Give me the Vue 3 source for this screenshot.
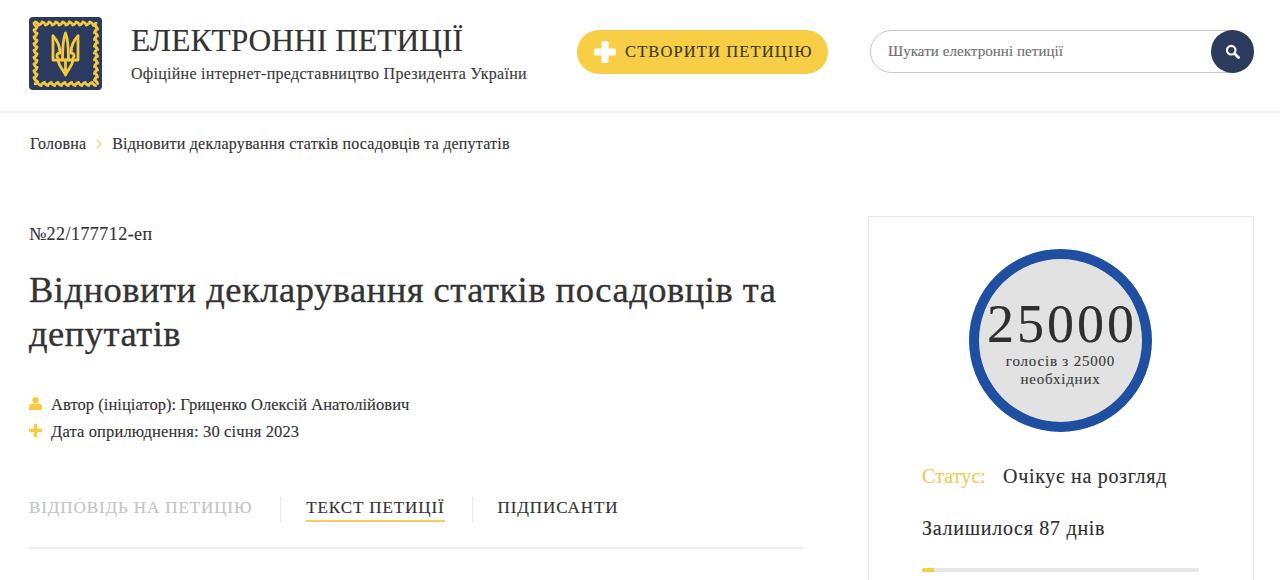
<script setup>
const leaves = []
const a = 6.5, b = 67, step = 6.800
for (let p = a + 1; p < b; p += step) {
  leaves.push({ x: p, y: a - 0.8, r: 30 })
  leaves.push({ x: p + 3.400, y: a + 0.8, r: -30 })
  leaves.push({ x: p, y: b - 0.8, r: -30 })
  leaves.push({ x: p + 3.400, y: b + 0.8, r: 30 })
  leaves.push({ x: a - 0.8, y: p, r: 60 })
  leaves.push({ x: a + 0.8, y: p + 3.400, r: -60 })
  leaves.push({ x: b - 0.8, y: p, r: -60 })
  leaves.push({ x: b + 0.8, y: p + 3.400, r: 60 })
}
const tabs = [
  { label: 'ВІДПОВІДЬ НА ПЕТИЦІЮ', kind: 'muted' },
  { label: 'ТЕКСТ ПЕТИЦІЇ', kind: 'active' },
  { label: 'ПІДПИСАНТИ', kind: '' }
]
</script>

<template>
  <div class="page">
    <header class="header">
      <div class="brand">
        <svg class="logo" width="73" height="73" viewBox="0 0 73 73">
          <rect width="73" height="73" rx="4" fill="#2c3a5e" />
          <ellipse v-for="(l, i) in leaves" :key="i" :cx="l.x" :cy="l.y" rx="3" ry="1.600" fill="#f2c93f" :transform="`rotate(${l.r} ${l.x} ${l.y})`" />
          <g fill="none" stroke="#f2c93f" stroke-width="2.800" stroke-linejoin="round" stroke-linecap="round">
            <path d="M24 19 V43 H49 V19" />
            <path d="M24 19 C29 24 31 30 31 36 C28 36 27 39 29 41" />
            <path d="M49 19 C44 24 42 30 42 36 C45 36 46 39 44 41" />
            <path d="M36.500 16 C34 22 33.500 30 33.500 43 M36.500 16 C39 22 39.500 30 39.500 43" />
            <path d="M29 43 C30 50 34 52 36.500 58 C39 52 43 50 44 43 M36.500 43 V54" />
          </g>
        </svg>
        <div class="brand-text">
          <div class="site-title">ЕЛЕКТРОННІ ПЕТИЦІЇ</div>
          <div class="site-sub">Офіційне інтернет-представництво Президента України</div>
        </div>
      </div>
      <button class="create">
        <svg width="22" height="22" viewBox="0 0 22 22" fill="#fff"><rect x="7.500" width="7" height="22" rx="1.500" /><rect y="7.500" width="22" height="7" rx="1.500" /></svg>
        <span>СТВОРИТИ ПЕТИЦІЮ</span>
      </button>
      <div class="search">
        <span class="placeholder">Шукати електронні петиції</span>
        <span class="search-btn">
          <svg width="15" height="15" viewBox="0 0 15 15" fill="none" stroke="#fff"><circle cx="6.200" cy="6.200" r="4.300" stroke-width="2.200" /><path d="M9.500 9.500 L13.500 13.500" stroke-width="2.800" stroke-linecap="round" /></svg>
        </span>
      </div>
    </header>

    <nav class="crumbs">
      <span>Головна</span>
      <svg width="6" height="10" viewBox="0 0 6 10" fill="none" stroke="#f5d873" stroke-width="1.500"><path d="M1 1 L5 5 L1 9" /></svg>
      <span>Відновити декларування статків посадовців та депутатів</span>
    </nav>

    <main class="content">
      <section class="left">
        <div class="number">№22/177712-еп</div>
        <h1>Відновити декларування статків посадовців та депутатів</h1>
        <div class="meta">
          <div class="meta-row">
            <svg width="13" height="13" viewBox="0 0 13 13" fill="#f5cd45"><circle cx="6.500" cy="3.300" r="3.200" /><path d="M0 13 V9.500 C0 7.500 2 6.500 3.500 6.500 H9.500 C11 6.500 13 7.500 13 9.500 V13 Z" /></svg>
            <span>Автор (ініціатор): Гриценко Олексій Анатолійович</span>
          </div>
          <div class="meta-row">
            <svg width="13" height="13" viewBox="0 0 13 13" fill="#f5cd45"><path d="M4.700 0 H8.300 V4.700 H13 V8.300 H8.300 V13 H4.700 V8.300 H0 V4.700 H4.700 Z" /></svg>
            <span class="date">Дата оприлюднення: 30 січня 2023</span>
          </div>
        </div>
        <div class="tabs">
          <div v-for="t in tabs" :key="t.label" class="tab" :class="t.kind"><span>{{ t.label }}</span></div>
        </div>
      </section>

      <aside class="card">
        <div class="circle">
          <div class="count">25000</div>
          <div class="count-sub">голосів з 25000<br />необхідних</div>
        </div>
        <div class="status"><span class="status-key">Статус:</span><span class="status-val">Очікує на розгляд</span></div>
        <div class="remain">Залишилося 87 днів</div>
        <div class="bar"><div class="fill" style="width: 4.300%"></div></div>
      </aside>
    </main>
  </div>
</template>

<style>
html, body { margin: 0; background: #fff; overflow: hidden; }
</style>

<style scoped>
.page {
  height: 580px;
  overflow: hidden;
  background: #fff;
  color: #2f2f2f;
  font-family: "Liberation Serif", serif;
  -webkit-text-stroke: 0.15px currentColor;
}
.header {
  height: 111px;
  border-bottom: 2px solid #efefef;
  box-sizing: content-box;
  display: flex;
  align-items: flex-start;
  padding: 0 26px 0 29px;
}
.brand { display: flex; gap: 29px; width: 548px; padding-top: 17px; flex: none; }
.logo { display: block; flex: none; }
.brand-text { padding-top: 5px; }
.site-title { font-size: 31.500px; line-height: 38px; letter-spacing: 0; color: #333; white-space: nowrap; }
.site-sub { font-size: 16px; line-height: 20px; margin-top: 4px; letter-spacing: 0.28px; color: #3a3a3a; white-space: nowrap; }
.create {
  margin-top: 30px;
  width: 251px;
  height: 44px;
  flex: none;
  border: 0;
  border-radius: 22px;
  background: #f7ce46;
  display: flex;
  align-items: center;
  gap: 9px;
  padding: 0 0 0 17px;
  font-family: inherit;
  font-size: 16.500px;
  letter-spacing: 1.120px;
  color: #3d3a2b;
  white-space: nowrap;
}
.search {
  margin: 30px 0 0 42px;
  flex: 1;
  height: 43px;
  box-sizing: border-box;
  border: 1px solid #c3c6d0;
  border-radius: 22px;
  display: flex;
  align-items: center;
  padding-left: 17px;
  position: relative;
}
.placeholder { font-size: 15px; color: #6f6f6f; letter-spacing: 0.06px; }
.search-btn {
  position: absolute;
  right: -1px;
  top: -1px;
  width: 43px;
  height: 43px;
  border-radius: 50%;
  background: #2c3a5e;
  display: flex;
  align-items: center;
  justify-content: center;
}
.crumbs {
  display: flex;
  align-items: center;
  gap: 10px;
  padding: 21px 0 0 30px;
  height: 20px;
  font-size: 16px;
  line-height: 20px;
  letter-spacing: 0.2px;
  color: #333;
}
.content {
  display: flex;
  gap: 65px;
  padding: 62px 26px 0 29px;
}
.left { width: 774px; flex: none; }
.number { font-size: 18px; line-height: 22px; margin-top: 7px; letter-spacing: 0.45px; color: #333; }
h1 {
  margin: 23px 0 0;
  font-weight: 400;
  font-size: 36.500px;
  line-height: 44px;
  letter-spacing: 0.5px;
  color: #333;
  width: 770px;
  -webkit-text-stroke: 0.35px currentColor;
}
.meta { margin-top: 35px; }
.meta-row { display: flex; align-items: center; gap: 9px; height: 27px; font-size: 16.500px; letter-spacing: 0.05px; color: #333; }
.meta-row svg { flex: none; margin-top: -3px; }
.date { letter-spacing: 0.14px; }
.tabs {
  margin-top: 52px;
  display: flex;
  height: 50px;
  border-bottom: 2px solid #efefef;
  align-items: flex-start;
}
.tab {
  font-size: 17px;
  letter-spacing: 0.9px;
  height: 25px;
  line-height: 22px;
  padding: 0 27px 0 25px;
  border-left: 1px solid #e8e8e8;
  color: #333;
}
.tab span { display: inline-block; height: 25px; white-space: nowrap; }
.tab.muted { border-left: 0; padding-left: 0; padding-right: 28px; color: #c4c4c4; }
.tab.active span { border-bottom: 2.500px solid #f3cf58; box-sizing: border-box; }
.card {
  width: 386px;
  height: 420px;
  box-sizing: border-box;
  border: 1px solid #e6e6e6;
  padding: 32px 54px 0 53px;
  flex: none;
}
.circle {
  width: 183px;
  height: 183px;
  box-sizing: border-box;
  margin: 0 auto;
  border-radius: 50%;
  border: 10px solid #1f4fa1;
  background: #e2e2e2;
  display: flex;
  flex-direction: column;
  align-items: center;
}
.count { font-size: 54px; line-height: 56px; margin-top: 37px; letter-spacing: 3px; margin-right: -3px; color: #2f2f2f; white-space: nowrap; }
.count-sub { font-size: 15px; line-height: 18px; text-align: center; letter-spacing: 0.8px; color: #3a3a3a; }
.status { display: flex; gap: 17px; margin-top: 32px; font-size: 20px; line-height: 24px; color: #2f2f2f; }
.status-key { color: #efcb55; letter-spacing: 0.1px; }
.status-val { letter-spacing: 0.7px; }
.remain { margin-top: 28px; font-size: 20px; line-height: 24px; letter-spacing: 0.72px; color: #2f2f2f; }
.bar { margin-top: 28px; height: 4px; width: 277px; background: #e6e6e6; border-radius: 2px; overflow: hidden; }
.fill { height: 100%; background: #f5cd45; }
</style>
